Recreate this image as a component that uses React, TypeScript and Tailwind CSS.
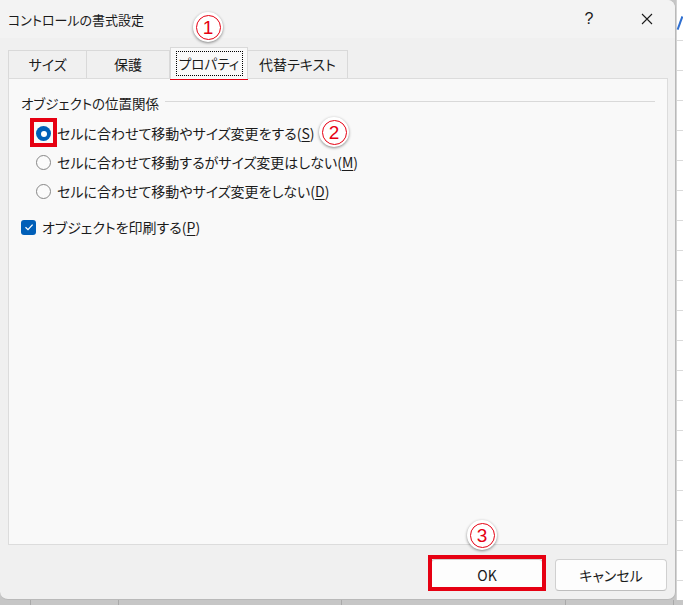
import React from "react";

function Circled({ n }: { n: string }) {
  return (
    <div className="w-[30px] h-[30px] rounded-full bg-white shadow-[0_1px_3px_rgba(0,0,0,0.45)] flex items-center justify-center">
      <div className="w-[25px] h-[25px] rounded-full border-[1.5px] border-[#e60012] flex items-center justify-center text-[#e60012] text-[19px] leading-none font-['Liberation_Sans',sans-serif]">
        {n}
      </div>
    </div>
  );
}

function Radio({ checked }: { checked?: boolean }) {
  if (checked) {
    return (
      <div className="w-[15px] h-[15px] rounded-full bg-[#005fb8] flex items-center justify-center shrink-0">
        <div className="w-[6px] h-[6px] rounded-full bg-white" />
      </div>
    );
  }
  return <div className="w-[15px] h-[15px] rounded-full border border-[#878787] bg-[#fbfbfb] shrink-0" />;
}

export default function App() {
  const rows: { text: string; key: string; checked?: boolean }[] = [
    { text: "セルに合わせて移動やサイズ変更をする(", key: "S", checked: true },
    { text: "セルに合わせて移動するがサイズ変更はしない(", key: "M" },
    { text: "セルに合わせて移動やサイズ変更をしない(", key: "D" },
  ];
  const stripLines = [40, 70, 100, 130, 160, 190, 220, 250, 280, 310, 340, 370, 400, 430, 460, 490, 520, 550, 580];
  return (
    <div className="relative w-[683px] h-[605px] overflow-hidden bg-[#c6c6c6] text-[#1b1b1b] font-['Noto_Sans_CJK_JP','Noto_Sans',sans-serif] [font-feature-settings:'palt']">
      <div className="flex h-[600px]">
        <div className="w-[676px] h-[600px] shrink-0 bg-[#f0f0f0] rounded-tr-[8px] rounded-b-[8px] border-r border-b border-[#b9b9b9] flex flex-col">
          {/* title bar */}
          <div className="h-[38px] flex items-center rounded-tr-[8px] bg-[#f3f3f3]">
            <div className="pl-[8px] text-[13px] leading-none flex-1">コントロールの書式設定</div>
            <div className="w-[46px] mr-[12px] text-center text-[16px] leading-none font-['Liberation_Sans',sans-serif]">?</div>
            <div className="w-[46px] mr-[5px] flex justify-center">
              <svg width="12" height="12" viewBox="0 0 12 12">
                <path d="M1 1 L11 11 M11 1 L1 11" stroke="#1b1b1b" strokeWidth="1.1" fill="none" />
              </svg>
            </div>
          </div>
          {/* tabs */}
          <div className="mt-[9px] h-[31px] px-[8px] flex items-end text-[14px] whitespace-nowrap">
            <div className="w-[79px] h-[28px] border border-b-0 border-[#d9d9d9] bg-[#f0f0f0] flex items-center justify-center">サイズ</div>
            <div className="w-[83px] h-[28px] border border-b-0 border-l-0 border-[#d9d9d9] bg-[#f0f0f0] flex items-center justify-center">保護</div>
            <div className="relative z-10 w-[78px] h-[32px] -mb-[1px] border border-b-0 border-[#d9d9d9] bg-[#f9f9f9] flex items-center justify-center">
              <div className="border border-dotted border-black h-[25px] w-[67px] flex items-center justify-center text-[13.5px]">プロパティ</div>
            </div>
            <div className="w-[100px] h-[28px] border border-b-0 border-l-0 border-[#d9d9d9] bg-[#f0f0f0] flex items-center justify-center">代替テキスト</div>
          </div>
          {/* pane */}
          <div className="mx-[8px] w-[660px] h-[467px] border border-[#dcdcdc] bg-[#f9f9f9] pt-[14px]">
            <div className="flex items-start gap-[6px] pl-[12px] pr-[12px] h-[20px]">
              <div className="text-[13.5px] leading-[20px]">オブジェクトの位置関係</div>
              <div className="flex-1 h-px bg-[#d9d9d9] mt-[8px]" />
            </div>
            <div className="mt-[6px]">
              {rows.map((r) => (
                <div key={r.key} className="h-[29px] flex items-center pl-[27px] gap-[6px] text-[14px]">
                  <Radio checked={r.checked} />
                  <div>
                    {r.text}
                    <span className="underline underline-offset-2">{r.key}</span>)
                  </div>
                </div>
              ))}
            </div>
            <div className="mt-[7px] h-[28px] flex items-center pl-[12px] gap-[6px] text-[14px]">
              <div className="w-[15px] h-[15px] rounded-[3px] bg-[#005fb8] flex items-center justify-center shrink-0">
                <svg width="10" height="10" viewBox="0 0 10 10">
                  <path d="M1.5 5.2 L4 7.6 L8.6 2.6" stroke="white" strokeWidth="1.3" fill="none" />
                </svg>
              </div>
              <div>
                オブジェクトを印刷する(<span className="underline underline-offset-2">P</span>)
              </div>
            </div>
          </div>
          {/* buttons */}
          <div className="pt-[14px] pr-[8px] flex justify-end gap-[12px] text-[14px]">
            <div className="w-[112px] h-[32px] rounded-[4px] border border-[#d0d0d0] border-b-[#bdbdbd] bg-[#fdfdfd] flex items-center justify-center">OK</div>
            <div className="w-[112px] h-[32px] rounded-[4px] border border-[#d0d0d0] border-b-[#bdbdbd] bg-[#fdfdfd] flex items-center justify-center">キャンセル</div>
          </div>
        </div>
        {/* right spreadsheet strip */}
        <div className="relative flex-1 bg-white border-l border-[#d4d4d4]">
          <div className="absolute left-[2px] top-[16px] w-[2px] h-[14px] bg-[#2f6fd0] rotate-[20deg]" />
          {stripLines.map((y) => (
            <div key={y} className="absolute left-0 right-0 h-px bg-[#dadada]" style={{ top: y }} />
          ))}
        </div>
      </div>
      {/* bottom strip */}
      <div className="relative h-[5px] bg-[#c6c6c6]">
        {[30, 118, 341, 565, 673].map((x) => (
          <div key={x} className="absolute top-0 bottom-0 w-px bg-[#a9a9a9]" style={{ left: x }} />
        ))}
      </div>

      {/* annotations */}
      <div className="absolute left-[170px] top-[47px] w-[78px] h-[33px] border-[4px] border-[#e60012]" />
      <div className="absolute left-[30px] top-[118px] w-[27px] h-[29px] border-[4px] border-[#e60012]" />
      <div className="absolute left-[428px] top-[555px] w-[118px] h-[36px] border-[4px] border-[#e60012]" />
      <div className="absolute left-[193px] top-[12px]"><Circled n="1" /></div>
      <div className="absolute left-[319px] top-[117px]"><Circled n="2" /></div>
      <div className="absolute left-[467px] top-[520px]"><Circled n="3" /></div>
    </div>
  );
}
